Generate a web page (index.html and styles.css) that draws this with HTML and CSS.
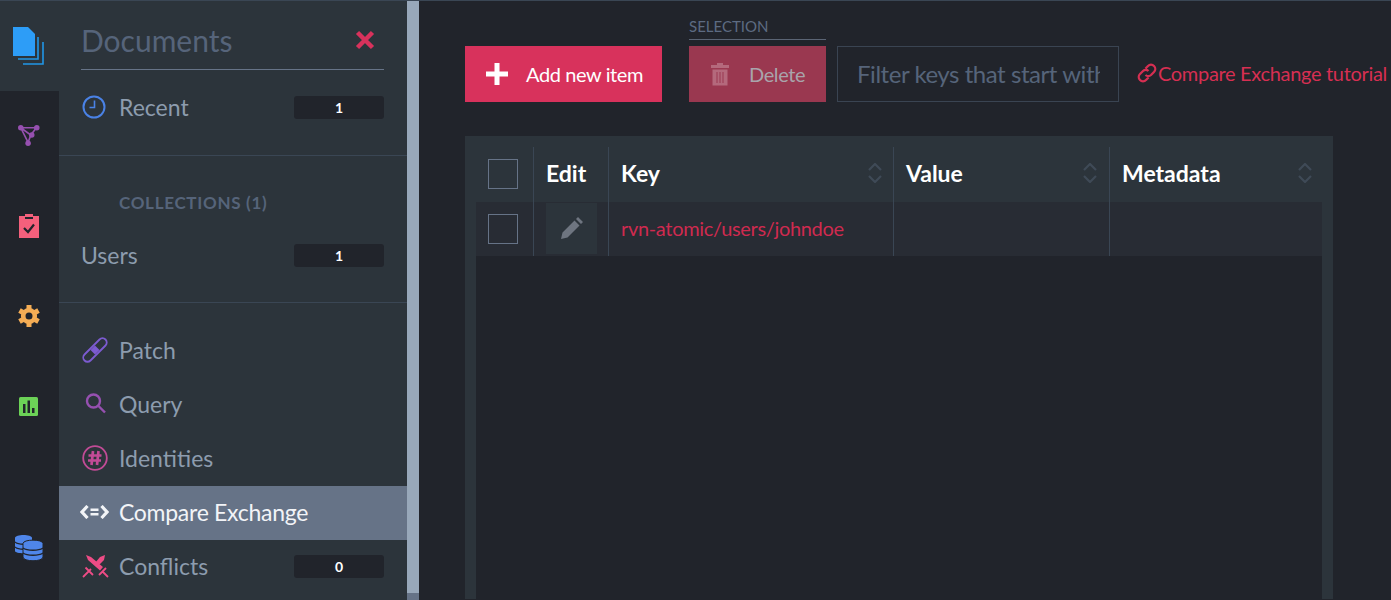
FILE: index.html
```html
<!DOCTYPE html>
<html lang="en">
<head>
    <meta charset="UTF-8">
    <meta name="viewport" content="width=device-width, initial-scale=1.0">
    <title>Compare Exchange</title>
    <link rel="stylesheet" href="styles.css">
</head>
<body>
<div class="app">

    <!-- main icon rail -->
    <nav class="rail">
        <a class="rail-item active">
            <svg width="32" height="39" viewBox="0 0 32 39">
                <path d="M0 0H15L22 7V29H0Z" fill="#2d9df7"/>
                <path d="M25 10V32H5M30 15V37H10" fill="none" stroke="#2196e8" stroke-width="1.6"/>
            </svg>
        </a>
        <a class="rail-item">
            <svg width="22" height="22" viewBox="0 0 24 24">
                <path d="M3 3H20L14 11M3 3L11 19L14 11L3 3" fill="none" stroke="#9650b0" stroke-width="1.8"/>
                <circle cx="3" cy="3" r="3" fill="#9650b0"/><circle cx="20.500" cy="3" r="3" fill="#9650b0"/>
                <circle cx="11" cy="20" r="3" fill="#9650b0"/><circle cx="15" cy="11" r="3" fill="#9650b0"/>
            </svg>
        </a>
        <a class="rail-item">
            <svg width="20" height="24" viewBox="0 0 20 24">
                <path d="M0 2H6V0H14V2H20V24H0Z" fill="#f4607c"/>
                <rect x="6" y="3" width="8" height="2" fill="#21242b"/>
                <path d="M5 14L9 18L15 10.500" fill="none" stroke="#21242b" stroke-width="2.200"/>
            </svg>
        </a>
        <a class="rail-item">
            <svg width="24" height="24" viewBox="0 0 24 24">
                <circle cx="12" cy="12" r="5.800" fill="none" stroke="#f5ad55" stroke-width="4.600"/>
                <path d="M12 1V5M12 19V23M2.500 6.500L6 8.500M18 15.500L21.500 17.500M21.500 6.500L18 8.500M6 15.500L2.500 17.500" stroke="#f5ad55" stroke-width="5"/>
            </svg>
        </a>
        <a class="rail-item">
            <svg width="19" height="19" viewBox="0 0 19 19">
                <rect width="19" height="19" rx="1.500" fill="#6cd257"/>
                <path d="M4 7H6.500V16H4ZM8.500 3.500H11V16H8.500ZM13 11H15.500V16H13Z" fill="#21242b"/>
            </svg>
        </a>
        <a class="rail-item storage">
            <svg width="28" height="27" viewBox="0 0 28 27">
                <path d="M0 4C0 0 17 0 17 4V17C17 20 0 20 0 17Z" fill="#4f86ea"/>
                <path d="M0 8C3 11 14 11 17 8M0 13C3 16 14 16 17 13" fill="none" stroke="#21242b" stroke-width="1.300"/>
                <path d="M8 9.500C8 5 28 5 28 9.500V23C28 28 8 28 8 23Z" fill="#4f86ea" stroke="#21242b"/>
                <path d="M8 14C12 17 24 17 28 14M8 19C12 22 24 22 28 19" fill="none" stroke="#21242b" stroke-width="1.300"/>
            </svg>
        </a>
    </nav>

    <!-- documents menu -->
    <aside class="sidebar">
        <div class="side-head">
            <h2>Documents</h2>
            <svg width="20" height="20" viewBox="0 0 20 20"><path d="M2.500 2.500L17.500 17.500M17.500 2.500L2.500 17.500" stroke="#d8325c" stroke-width="4.500"/></svg>
        </div>
        <div class="side-group first">
            <a class="side-row">
                <span class="side-icon">
                    <svg width="24" height="24" viewBox="0 0 24 24"><circle cx="12" cy="12" r="10.500" fill="none" stroke="#4a82e6" stroke-width="2"/><path d="M12.500 5.500V12.500H7.500" fill="none" stroke="#4a82e6" stroke-width="1.600"/></svg>
                </span>
                <span class="side-label">Recent</span>
                <span class="badge">1</span>
            </a>
        </div>
        <div class="side-group">
            <h3>COLLECTIONS (1)</h3>
            <a class="side-row">
                <span class="side-label">Users</span>
                <span class="badge">1</span>
            </a>
        </div>
        <div class="side-group tools">
            <a class="side-row">
                <span class="side-icon">
                    <svg width="26" height="26" viewBox="0 0 26 26">
                        <path d="M2.500 17.500L17.500 2.500A4.200 4.200 0 0 1 23.500 8.500L8.500 23.500A4.200 4.200 0 0 1 2.500 17.500Z" fill="none" stroke="#7c5bd0" stroke-width="1.800"/>
                        <path d="M13 8.500L17.500 13L13 17.500L8.500 13Z" fill="#7c5bd0"/>
                        <path d="M13 11V11.100M11 13V13.100M15 13V13.100M13 15V15.100" stroke="#2c343b" stroke-width="1.200"/>
                    </svg>
                </span>
                <span class="side-label">Patch</span>
            </a>
            <a class="side-row">
                <span class="side-icon icon-query">
                    <svg width="24" height="24" viewBox="0 0 24 24"><circle cx="9.500" cy="9" r="6.500" fill="none" stroke="#9650b0" stroke-width="2.400"/><path d="M14.500 14L21 20.500" stroke="#9650b0" stroke-width="2.400"/></svg>
                </span>
                <span class="side-label">Query</span>
            </a>
            <a class="side-row">
                <span class="side-icon">
                    <svg width="26" height="26" viewBox="0 0 26 26"><circle cx="13" cy="13" r="11.800" fill="none" stroke="#c24b96" stroke-width="1.800"/><path d="M11 6L9.500 20M16.500 6L15 20M6.500 10.500H19.500M6 15.500H19" fill="none" stroke="#c24b96" stroke-width="2.700"/></svg>
                </span>
                <span class="side-label">Identities</span>
            </a>
            <a class="side-row selected">
                <span class="side-icon icon-cmpx">
                    <svg width="29" height="14" viewBox="0 0 28 14"><path d="M7 1L1.500 7L7 13M21 1L26.500 7L21 13" fill="none" stroke="#f2f4f7" stroke-width="3.200"/><path d="M10 3.500H18V6H10ZM10 8H18V10.500H10Z" fill="#f2f4f7"/></svg>
                </span>
                <span class="side-label">Compare Exchange</span>
            </a>
            <a class="side-row">
                <span class="side-icon">
                    <svg width="27" height="23" viewBox="0 0 27 23">
                        <path d="M4 0L9 2L21 12L18 15.500L6 5ZM23 0L22 5L16 11L13 8L18 2Z" fill="#ee4c86"/>
                        <path d="M1 22L9 14M3.500 12.500L11 20M26 22L20 16M17 20L24 13" fill="none" stroke="#ee4c86" stroke-width="1.800"/>
                    </svg>
                </span>
                <span class="side-label">Conflicts</span>
                <span class="badge">0</span>
            </a>
        </div>
    </aside>

    <div class="scrollbar"><div class="scroll-thumb"></div></div>

    <main class="content">
        <div class="toolbar">
            <button class="btn btn-add">
                <svg width="22" height="22" viewBox="0 0 22 22"><path d="M8.500 0H13.500V8.500H22V13.500H13.500V22H8.500V13.500H0V8.500H8.500Z" fill="#fff"/></svg>
                Add new item
            </button>
            <div class="selection">
                <div class="selection-title">SELECTION</div>
                <button class="btn btn-delete">
                    <svg width="18" height="24" viewBox="0 0 18 24"><path d="M6 1H12V3H18V6H0V3H6ZM1.500 7.500H16.500V23.500H1.500Z" fill="#b4697c"/><path d="M6 10V21M9 10V21M12 10V21" stroke="#9a3850" stroke-width="1"/></svg>
                    Delete
                </button>
            </div>
            <input class="filter" type="text" placeholder="Filter keys that start with">
            <a class="tutorial">
                <svg width="20" height="20" viewBox="0 0 20 20"><path d="M8.500 5.500L11 3A4 4 0 0 1 17 9L14 12A4 4 0 0 1 8.500 12M11.500 14.500L9 17A4 4 0 0 1 3 11L6 8A4 4 0 0 1 11.500 8" fill="none" stroke="#d62f52" stroke-width="2.300"/></svg>
                Compare Exchange tutorial
            </a>
        </div>

        <div class="table-wrap">
            <div class="grid head">
                <div class="cell cell-check"><span class="checkbox"></span></div>
                <div class="cell cell-edit"><span class="col-title">Edit</span></div>
                <div class="cell"><span class="col-title">Key</span><svg class="sort" width="14" height="20" viewBox="0 0 14 20"><path d="M1 7L7 1L13 7M1 13L7 19L13 13" fill="none" stroke="#3f4a57" stroke-width="2.200"/></svg></div>
                <div class="cell"><span class="col-title">Value</span><svg class="sort" width="14" height="20" viewBox="0 0 14 20"><path d="M1 7L7 1L13 7M1 13L7 19L13 13" fill="none" stroke="#3f4a57" stroke-width="2.200"/></svg></div>
                <div class="cell"><span class="col-title">Metadata</span><svg class="sort" width="14" height="20" viewBox="0 0 14 20"><path d="M1 7L7 1L13 7M1 13L7 19L13 13" fill="none" stroke="#3f4a57" stroke-width="2.200"/></svg></div>
            </div>
            <div class="table-body">
                <div class="grid row">
                    <div class="cell cell-check"><span class="checkbox"></span></div>
                    <div class="cell cell-edit">
                        <span class="edit-btn">
                            <svg width="22" height="22" viewBox="0 0 22 22"><path d="M0 22L1.500 15.500L13.500 3.500L18.500 8.500L6.500 20.500ZM15 2L17 0L22 5L20 7Z" fill="#6e7580"/></svg>
                        </span>
                    </div>
                    <div class="cell key">rvn-atomic/users/johndoe</div>
                    <div class="cell"></div>
                    <div class="cell"></div>
                </div>
            </div>
        </div>
    </main>
</div>
</body>
</html>
```

FILE: styles.css
```css
* {
    box-sizing: border-box;
}
html, body {
    margin: 0;
    height: 100%;
    overflow: hidden;
}
body {
    font-family: Lato, sans-serif;
    background-color: #21242b;
    border-top: 1px solid #3a4654;
}
.app {
    display: flex;
    height: 599px;
}

/* icon rail */
.rail {
    width: 59px;
    flex: none;
    display: flex;
    flex-direction: column;
    padding-bottom: 8px;
    background-color: #21242b;
}
.rail-item {
    height: 90px;
    flex: none;
    display: flex;
    align-items: center;
    justify-content: center;
    padding-right: 2px;
}
.rail-item.active {
    background-color: #2c343b;
}
.rail-item.storage {
    margin-top: auto;
}

/* documents menu */
.sidebar {
    width: 348px;
    flex: none;
    overflow: hidden;
    background-color: #2c343b;
}
.side-head {
    display: flex;
    align-items: center;
    justify-content: space-between;
    height: 69px;
    margin: 0 23px 0 22px;
    padding: 9px 9px 0 0;
    border-bottom: 1px solid #667387;
}
.side-head h2 {
    margin: 0;
    font-size: 30px;
    font-weight: 400;
    color: #56647a;
}
.side-group {
    padding: 0 23px 20px 22px;
    border-bottom: 1px solid #3a4654;
}
.side-group.first {
    padding-top: 10px;
    padding-bottom: 21px;
}
.side-group h3 {
    margin: 0;
    padding: 37px 0 16px 38px;
    font-size: 17px;
    font-weight: 700;
    letter-spacing: 0.7px;
    line-height: 19px;
    color: #56647a;
}
.side-group.tools {
    padding-top: 21px;
    border-bottom: none;
}
.side-row {
    display: flex;
    align-items: center;
    height: 54px;
    font-size: 23px;
    color: #8d9cae;
}
.tools .side-row {
    padding-bottom: 2px;
}
.side-icon {
    width: 38px;
    flex: none;
    display: flex;
    align-items: center;
    padding-left: 1px;
}
.icon-query {
    padding-left: 3px;
}
.icon-cmpx {
    padding-left: 0;
    margin-left: -1px;
    width: 39px;
}
.side-label {
    flex: 1;
}
.tools .side-row.selected {
    margin: 0 -23px 0 -22px;
    padding: 0 23px 2px 22px;
    background-color: #667387;
    color: #f2f4f7;
    letter-spacing: -0.28px;
}
.badge {
    width: 90px;
    height: 23px;
    border-radius: 3px;
    background-color: #21242b;
    color: #fff;
    font-size: 14px;
    font-weight: 700;
    line-height: 23px;
    text-align: center;
}

.scrollbar {
    width: 12px;
    flex: none;
    background-color: #667387;
}
.scroll-thumb {
    height: 592px;
    background-color: #98a8ba;
}

/* right side */
.content {
    flex: 1;
    min-width: 0;
    padding: 18px 0 0 46px;
}
.toolbar {
    display: flex;
    align-items: flex-end;
    white-space: nowrap;
}
.btn {
    display: flex;
    align-items: center;
    height: 56px;
    border: none;
    font-family: inherit;
    font-size: 20px;
    letter-spacing: -0.4px;
    color: #fff;
}
.btn-add {
    width: 197px;
    flex: none;
    gap: 18px;
    padding: 0 0 0 21px;
    margin-right: 27px;
    background-color: #d8325c;
}
.selection {
    width: 137px;
    flex: none;
    margin-right: 11px;
}
.selection-title {
    height: 21px;
    margin-bottom: 6px;
    border-bottom: 1px solid #5a6474;
    font-size: 15px;
    line-height: 14px;
    color: #5d6b82;
}
.btn-delete {
    width: 137px;
    gap: 20px;
    padding: 0 0 0 22px;
    background-color: #9a3850;
    color: #a9a4ab;
}
.filter {
    width: 282px;
    height: 56px;
    flex: none;
    padding: 0 18px 2px 19px;
    border: 1px solid #3a4452;
    background: transparent;
    font-family: inherit;
    font-size: 24px;
    letter-spacing: -0.45px;
}
.filter::placeholder {
    color: #56647a;
    opacity: 1;
}
.tutorial {
    display: flex;
    align-items: center;
    gap: 1px;
    height: 56px;
    margin-left: 18px;
    padding-bottom: 2px;
    font-size: 20px;
    letter-spacing: -0.32px;
    color: #d62f52;
}

/* table */
.table-wrap {
    display: flex;
    flex-direction: column;
    width: 868px;
    height: 463px;
    margin-top: 34px;
    padding: 11px 11px 0;
    background-color: #2c343b;
}
.head {
    flex: none;
}
.grid {
    display: grid;
    grid-template-columns: 58px 75px 285px 216px 212px;
}
.table-body {
    flex: 1;
    background-color: #21242b;
}
.row {
    height: 54px;
    background-color: #282c34;
}
.head .cell {
    height: 55px;
    padding-bottom: 3px;
}
.head .cell-check {
    padding-bottom: 2px;
}
.cell {
    display: flex;
    align-items: center;
    justify-content: space-between;
    padding: 0 10px 0 12px;
    border-right: 1px solid #3a4654;
}
.cell:last-child {
    border-right: none;
}
.cell-check {
    justify-content: flex-start;
    padding: 0 0 0 12px;
}
.cell-edit {
    padding: 0 0 0 12px;
}
.checkbox {
    width: 30px;
    height: 30px;
    border: 1px solid #667387;
}
.col-title {
    font-size: 23px;
    font-weight: 700;
    color: #fff;
}
.sort {
    margin-right: 1px;
}
.head .cell:nth-child(4) .sort {
    margin-right: 2px;
}
.head .cell:last-child .sort {
    margin-right: 0;
}
.edit-btn {
    width: 51px;
    height: 51px;
    margin-bottom: 2px;
    display: flex;
    align-items: center;
    justify-content: center;
    background-color: #2c343b;
}
.key {
    padding-bottom: 3px;
    font-size: 20px;
    letter-spacing: -0.33px;
    color: #cf2a4f;
}
```
